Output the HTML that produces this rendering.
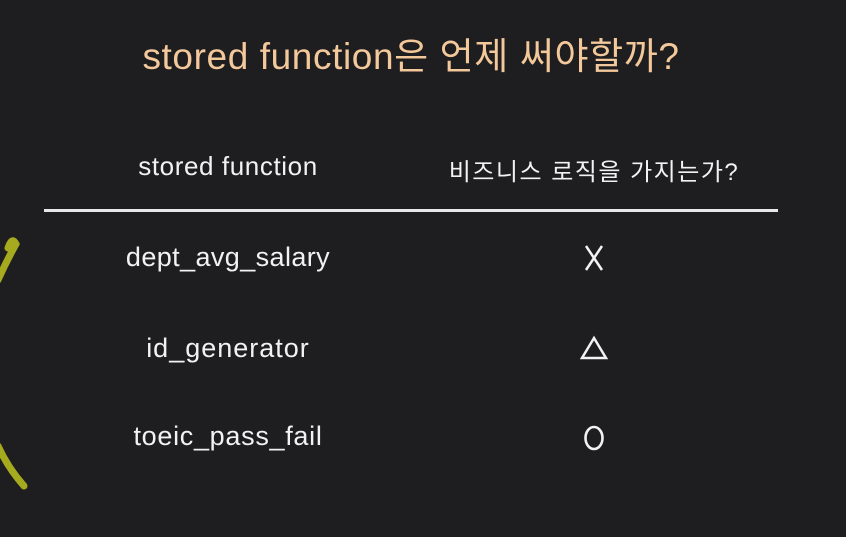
<!DOCTYPE html>
<html><head><meta charset="utf-8"><style>
html,body{margin:0;padding:0;width:846px;height:537px;overflow:hidden;background:#1e1d1f;}
body{position:relative;font-family:"Liberation Sans","Noto Sans CJK KR",sans-serif;}
.t{position:absolute;white-space:nowrap;transform:translateX(-50%);color:#f2f2f2;}
</style></head><body>
<div class="t" style="left:411px;top:26px;font-size:37px;color:#f3c89b;letter-spacing:0.6px;">stored function은 언제 써야할까?</div>
<div class="t" style="left:228px;top:151px;font-size:26px;letter-spacing:0.6px;">stored function</div>
<div class="t" style="left:594px;top:152px;font-size:24px;letter-spacing:1.5px;">비즈니스 로직을 가지는가?</div>
<div style="position:absolute;left:44px;top:209px;width:734px;height:3px;background:#e8e8e8;"></div>
<div class="t" style="left:228px;top:242px;font-size:27px;letter-spacing:0.4px;">dept_avg_salary</div>
<div class="t" style="left:228px;top:333px;font-size:27px;letter-spacing:1px;">id_generator</div>
<div class="t" style="left:228px;top:421px;font-size:27px;letter-spacing:0.7px;">toeic_pass_fail</div>
<svg width="846" height="537" style="position:absolute;left:0;top:0">
<path d="M586 246 L602 270 M602 246 L586 270" stroke="#f2f2f2" stroke-width="2.5" fill="none"/>
<path d="M594 338 L606 358 L582 358 Z" stroke="#f2f2f2" stroke-width="2.5" fill="none" stroke-linejoin="miter"/>
<ellipse cx="594" cy="438" rx="8.5" ry="11" stroke="#f2f2f2" stroke-width="2.6" fill="none"/>
<path d="M8 248 Q12 236 16 244 Q6 262 -2 280" stroke="#a5aa1e" stroke-width="7" fill="none" stroke-linecap="round"/>
<path d="M-2 446 Q8 468 24 486" stroke="#a5aa1e" stroke-width="7" fill="none" stroke-linecap="round"/>
</svg>
</body></html>
